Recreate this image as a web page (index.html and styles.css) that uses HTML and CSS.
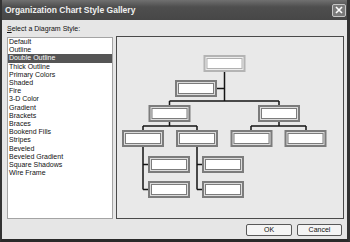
FILE: index.html
```html
<!DOCTYPE html>
<html>
<head>
<meta charset="utf-8">
<link rel="stylesheet" href="styles.css">
</head>
<body>
<div class="window">
  <div class="titlebar">
    <span class="title">Organization Chart Style Gallery</span>
    <span class="close"><svg width="8" height="8" viewBox="0 0 8 8"><path d="M1 1L7 7M7 1L1 7" stroke="#fff" stroke-width="1.6"/></svg></span>
  </div>
  <div class="body">
    <div class="label"><span class="ul">S</span>elect a Diagram Style:</div>
    <div class="main">
      <ul class="list">
        <li>Default</li>
        <li>Outline</li>
        <li class="sel">Double Outline</li>
        <li>Thick Outline</li>
        <li>Primary Colors</li>
        <li>Shaded</li>
        <li>Fire</li>
        <li>3-D Color</li>
        <li>Gradient</li>
        <li>Brackets</li>
        <li>Braces</li>
        <li>Bookend Fills</li>
        <li>Stripes</li>
        <li>Beveled</li>
        <li>Beveled Gradient</li>
        <li>Square Shadows</li>
        <li>Wire Frame</li>
      </ul>
      <div class="preview">
        <svg class="chart" width="226" height="181" viewBox="117 37 226 181">
          <defs>
            <symbol id="bx" viewBox="0 0 42 17">
              <rect x="0" y="0" width="42" height="17" fill="#7c7c7c"/>
              <rect x="2" y="2" width="38" height="13" fill="#dcdcdc"/>
              <rect x="3" y="3" width="36" height="11" fill="#7c7c7c"/>
              <rect x="4" y="4" width="34" height="9" fill="#fff"/>
            </symbol>
            <symbol id="bxl" viewBox="0 0 42 17">
              <rect x="0" y="0" width="42" height="17" fill="#b4b4b4"/>
              <rect x="2" y="2" width="38" height="13" fill="#ececec"/>
              <rect x="3" y="3" width="36" height="11" fill="#b0b0b0"/>
              <rect x="4" y="4" width="34" height="9" fill="#fff"/>
            </symbol>
          </defs>
          <g stroke="#151515" stroke-width="1.5" fill="none">
            <path d="M224.5 72V101"/>
            <path d="M217 88.5H224.5"/>
            <path d="M169.5 101H279"/>
            <path d="M169.5 101V105M279 101V105"/>
            <path d="M169.5 122V126M143 126H197M143 126V130M197 126V130"/>
            <path d="M279 122V126M251 126H306M251 126V130M306 126V130"/>
            <path d="M143 147V189.5M143 164.5H148M143 189.5H148"/>
            <path d="M197 147V189.5M197 164.5H202M197 189.5H202"/>
          </g>
          <use href="#bxl" x="203" y="55" width="43" height="17"/>
          <use href="#bx" x="175" y="80" width="42" height="17"/>
          <use href="#bx" x="148" y="105" width="43" height="17"/>
          <use href="#bx" x="258" y="105" width="42" height="17"/>
          <use href="#bx" x="122" y="130" width="42" height="17"/>
          <use href="#bx" x="176" y="130" width="42" height="17"/>
          <use href="#bx" x="230" y="130" width="43" height="17"/>
          <use href="#bx" x="284" y="130" width="43" height="17"/>
          <use href="#bx" x="148" y="156" width="42" height="17"/>
          <use href="#bx" x="148" y="181" width="42" height="17"/>
          <use href="#bx" x="202" y="156" width="42" height="17"/>
          <use href="#bx" x="202" y="181" width="42" height="17"/>
        </svg>
      </div>
    </div>
    <div class="buttons">
      <button class="btn ok">OK</button>
      <button class="btn cancel">Cancel</button>
    </div>
  </div>
</div>
</body>
</html>
```
FILE: styles.css
```css
* { box-sizing: border-box; margin: 0; padding: 0; }
html, body { width: 350px; height: 242px; overflow: hidden; }
body { font-family: "Liberation Sans", Arial, sans-serif; color: #111; }

.window {
  width: 350px;
  height: 242px;
  background: #e6e6e6;
  border-left: 2px solid #333;
  border-right: 3px solid #333;
  border-bottom: 3px solid #2a2a2a;
  display: flex;
  flex-direction: column;
}

.titlebar {
  height: 20px;
  flex: none;
  background: linear-gradient(#707070, #4e4e4e 35%, #474747);
  display: flex;
  align-items: center;
  justify-content: space-between;
  padding: 0 1px 0 3px;
  color: #f0f0f0;
  font-weight: bold;
  font-size: 8.5px;
}

.close {
  width: 14px;
  height: 13px;
  border: 1px solid #c6c6c6;
  background: #7a7a7a;
  border-radius: 2px;
  display: flex;
  align-items: center;
  justify-content: center;
}

.body {
  flex: 1;
  padding: 4px 3px 0 5px;
  display: flex;
  flex-direction: column;
}

.label {
  font-size: 7px;
  line-height: 9px;
  height: 9px;
}
.ul { text-decoration: underline; }

.main {
  display: flex;
  gap: 3px;
  margin-top: 3px;
  height: 183px;
}

.list {
  list-style: none;
  width: 106px;
  height: 182px;
  margin-top: 1px;
  background: #fff;
  border: 1px solid #a4a4a4;
  font-size: 7px;
  line-height: 8.2px;
}
.list li { padding-left: 1px; white-space: nowrap; }
.list li.sel { background: #555; color: #fff; }

.preview {
  width: 228px;
  height: 183px;
  border: 1px solid #4a4a4a;
  background: #e9e9e9;
}
.chart { display: block; }

.buttons {
  display: flex;
  justify-content: flex-end;
  gap: 5px;
  margin-top: 5px;
  padding-right: 2px;
}

.btn {
  height: 12px;
  font-family: "Liberation Sans", Arial, sans-serif;
  font-size: 7px;
  line-height: 10px;
  background: #f4f4f4;
  border: 1px solid #585858;
  border-radius: 2px;
  color: #111;
}
.ok { width: 46px; }
.cancel { width: 45px; }
```
